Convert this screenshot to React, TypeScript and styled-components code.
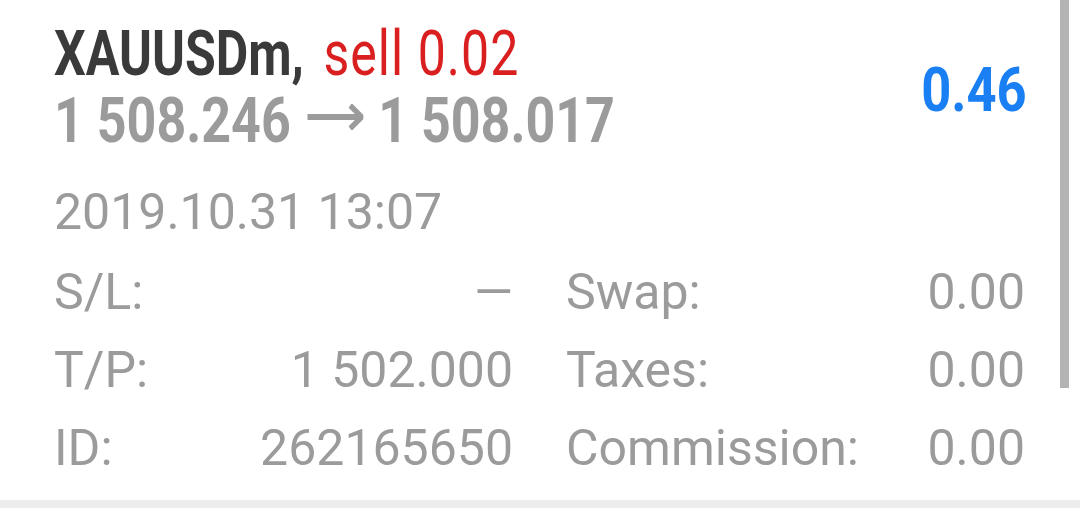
import React from "react";
import styled, { createGlobalStyle } from "styled-components";

const Global = createGlobalStyle`
  html, body { margin: 0; padding: 0; background: #ffffff; }
  body { font-family: Roboto, "Liberation Sans", sans-serif; width: 1080px; height: 508px; overflow: hidden; }
`;

const Card = styled.div`
  position: relative;
  width: 1080px;
  height: 508px;
  box-sizing: border-box;
  padding: 20px 55px 0 54px;
  border-bottom: 8px solid #ededed;
  background: #fff;
`;

const Header = styled.div`
  display: flex;
  align-items: center;
  justify-content: space-between;
`;

const TitleBlock = styled.div`
  display: flex;
  flex-direction: column;
`;

const Condensed = styled.div<{ $scale: number }>`
  font-size: 63px;
  line-height: 67px;
  white-space: nowrap;
  transform: scaleX(${(p) => p.$scale});
  transform-origin: left center;
`;

const Symbol = styled.span`
  font-weight: 700;
  color: #3a3a3a;
`;

const Side = styled.span`
  font-weight: 400;
  color: #d91f1f;
  margin-left: 9px;
  letter-spacing: 1.3px;
`;

const Prices = styled(Condensed)`
  font-weight: 700;
  color: #9b9b9b;
`;

const ArrowIcon = styled.svg`
  display: inline-block;
  width: 68px;
  height: 26px;
  margin: 0 18px 0 20px;
  vertical-align: 12px;
`;

const Profit = styled.div`
  font-size: 61px;
  line-height: 67px;
  font-weight: 700;
  color: #1a7ff2;
  transform: scaleX(0.86);
  transform-origin: right center;
  margin-right: -2px;
  margin-top: 6px;
`;

const DateLine = styled.div`
  margin-top: 28px;
  font-size: 50px;
  line-height: 60px;
  color: #9b9b9b;
`;

const Grid = styled.div`
  margin-top: 11px;
  display: grid;
  grid-template-columns: 1fr 1fr;
  column-gap: 53px;
`;

const Cell = styled.div`
  display: flex;
  justify-content: space-between;
  font-size: 50px;
  line-height: 78px;
  color: #9b9b9b;
  white-space: nowrap;
`;

const Scrollbar = styled.div`
  position: absolute;
  top: 0;
  left: 1060px;
  width: 9px;
  height: 388px;
  background: #b3b3b3;
`;

const rows: [string, string, string, string][] = [
  ["S/L:", "—", "Swap:", "0.00"],
  ["T/P:", "1 502.000", "Taxes:", "0.00"],
  ["ID:", "262165650", "Commission:", "0.00"],
];

const Arrow = () => (
  <ArrowIcon viewBox="0 0 68 26" preserveAspectRatio="none" aria-hidden="true">
    <path d="M0 13 H66 M52 1.5 L66 13 L52 24.5" fill="none" stroke="#9b9b9b" strokeWidth="6" />
  </ArrowIcon>
);

export default function App() {
  return (
    <>
      <Global />
      <Card>
        <Header>
          <TitleBlock>
            <Condensed $scale={0.794}>
              <Symbol>XAUUSDm,</Symbol> <Side>sell 0.02</Side>
            </Condensed>
            <Prices $scale={0.825}>
              1 508.246<Arrow />1 508.017
            </Prices>
          </TitleBlock>
          <Profit>0.46</Profit>
        </Header>
        <DateLine>2019.10.31 13:07</DateLine>
        <Grid>
          {rows.map(([l1, v1, l2, v2]) => (
            <React.Fragment key={l1}>
              <Cell>
                <span>{l1}</span>
                <span>{v1}</span>
              </Cell>
              <Cell>
                <span>{l2}</span>
                <span>{v2}</span>
              </Cell>
            </React.Fragment>
          ))}
        </Grid>
        <Scrollbar />
      </Card>
    </>
  );
}
